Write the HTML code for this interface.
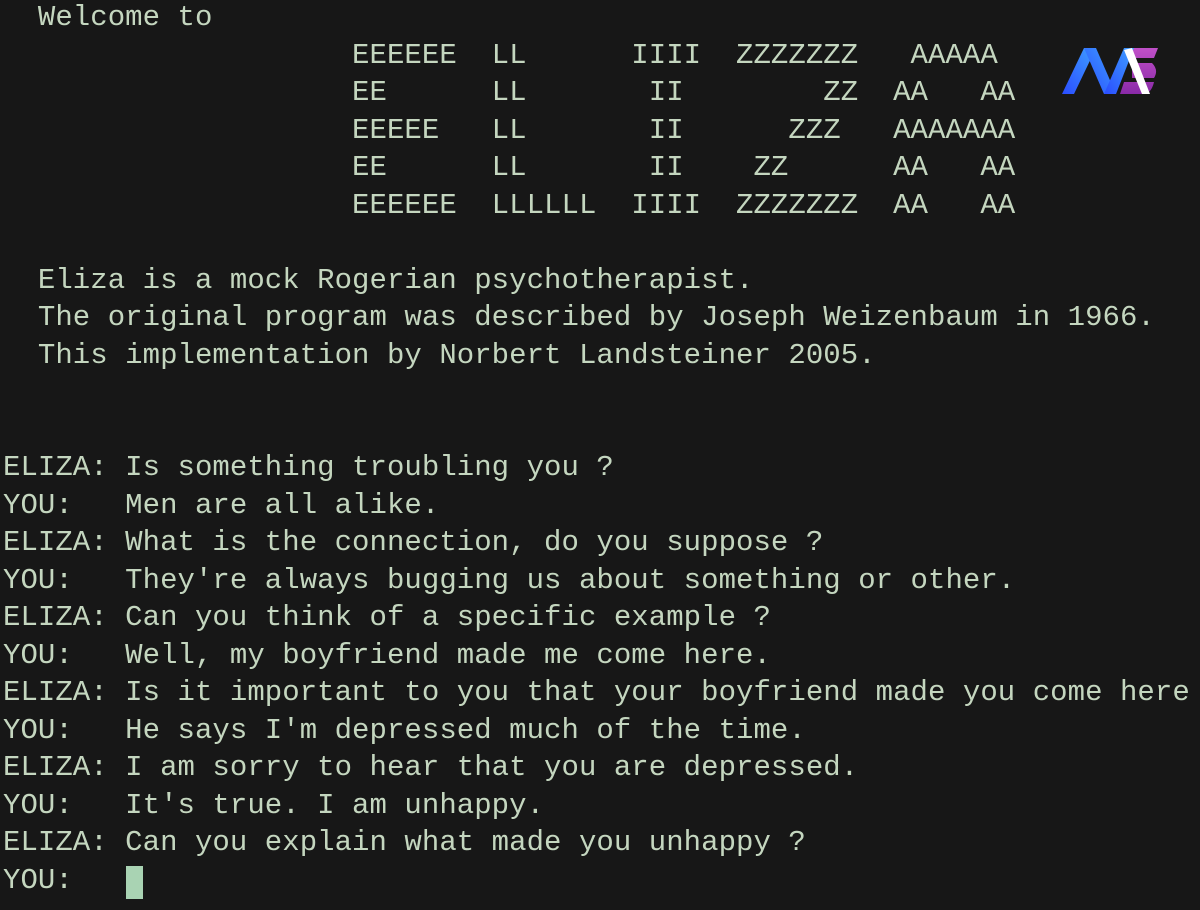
<!DOCTYPE html>
<html><head><meta charset="utf-8"><style>
html,body{margin:0;padding:0;background:#171717;width:1200px;height:910px;overflow:hidden}
pre{margin:0;position:absolute;left:3px;top:-1px;font-family:"Courier New","Liberation Mono",monospace;font-size:29px;line-height:37.5px;color:#c4d6bf;letter-spacing:0.05px}
.cur{position:absolute;left:126px;top:866px;width:17px;height:33px;background:#a9d3b3}
svg{position:absolute;left:1058px;top:44px}
</style></head><body>
<pre>  Welcome to
                    EEEEEE  LL      IIII  ZZZZZZZ   AAAAA
                    EE      LL       II        ZZ  AA   AA
                    EEEEE   LL       II      ZZZ   AAAAAAA
                    EE      LL       II    ZZ      AA   AA
                    EEEEEE  LLLLLL  IIII  ZZZZZZZ  AA   AA

  Eliza is a mock Rogerian psychotherapist.
  The original program was described by Joseph Weizenbaum in 1966.
  This implementation by Norbert Landsteiner 2005.


ELIZA: Is something troubling you ?
YOU:   Men are all alike.
ELIZA: What is the connection, do you suppose ?
YOU:   They're always bugging us about something or other.
ELIZA: Can you think of a specific example ?
YOU:   Well, my boyfriend made me come here.
ELIZA: Is it important to you that your boyfriend made you come here
YOU:   He says I'm depressed much of the time.
ELIZA: I am sorry to hear that you are depressed.
YOU:   It's true. I am unhappy.
ELIZA: Can you explain what made you unhappy ?
YOU:</pre>
<div class="cur"></div>
<svg width="104" height="56" viewBox="0 0 104 56">
<defs><linearGradient id="b" x1="0" y1="1" x2="1" y2="0"><stop offset="0" stop-color="#2a4cff"/><stop offset="1" stop-color="#3fa0ff"/></linearGradient>
<linearGradient id="p" x1="0" y1="0" x2="0" y2="1"><stop offset="0" stop-color="#c050c8"/><stop offset="1" stop-color="#8a2aa8"/></linearGradient></defs>
<path d="M72 4 H100 L96 14 H70Z M74 19 H94 Q101 26 96 34 H74Z M66 38 H96 Q94 47 88 50 H62Z" fill="url(#p)"/>
<path d="M4 50 L26 4 L38 4 L16 50Z" fill="url(#b)"/>
<path d="M26 4 L38 4 L58 50 L46 50Z" fill="url(#b)"/>
<path d="M46 50 L66 4 L76 4 L58 50Z" fill="url(#b)"/>
<path d="M66 6 L74 4 L92 50 L84 50Z" fill="#fff"/>
</svg>
</body></html>
